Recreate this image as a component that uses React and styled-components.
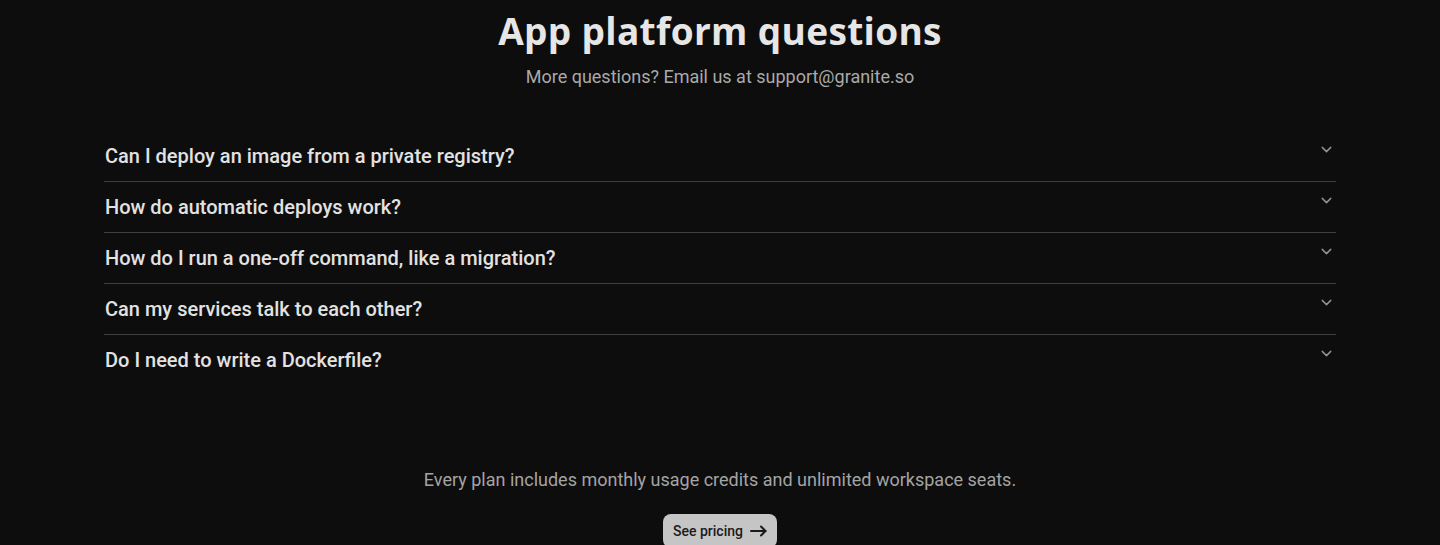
import React from 'react'
import styled, { createGlobalStyle } from 'styled-components'
import { ChevronDown } from 'lucide-react'

const questions = [
    'Can I deploy an image from a private registry?',
    'How do automatic deploys work?',
    'How do I run a one-off command, like a migration?',
    'Can my services talk to each other?',
    'Do I need to write a Dockerfile?',
]

const GlobalStyle = createGlobalStyle`
    body {
        margin: 0;
        background: #0d0d0d;
        font-family: Roboto, "Liberation Sans", sans-serif;
    }
`

// long thin arrow like the one on the pricing button
const Arrow = () => (
    <svg width="17" height="12" viewBox="0 0 17 12" fill="none" stroke="currentColor" strokeWidth="2" strokeLinecap="round" strokeLinejoin="round">
        <path d="M1 6h14.5" />
        <path d="M11 1.5L15.5 6 11 10.5" />
    </svg>
)

const App = () => {
    return (
        <>
            <GlobalStyle />
            <Page>
                <Header>
                    <Title>App platform questions</Title>
                    <Subtitle>More questions? Email us at support@granite.so</Subtitle>
                </Header>
                <List>
                    {questions.map((q) => (
                        <Item key={q}>
                            <Question>{q}</Question>
                            <Chevron>
                                <ChevronDown size={17} strokeWidth={2} />
                            </Chevron>
                        </Item>
                    ))}
                </List>
                <Footer>
                    <Note>Every plan includes monthly usage credits and unlimited workspace seats.</Note>
                    <PricingButton>
                        See pricing
                        <Arrow />
                    </PricingButton>
                </Footer>
            </Page>
        </>
    )
}

const Page = styled.div`
    display: flex;
    flex-direction: column;
    align-items: center;
    padding: 8px 104px 0;
    color: #e2e2e2;
`

const Header = styled.div`
    display: flex;
    flex-direction: column;
    align-items: center;
    gap: 12px;
`

const Title = styled.h1`
    margin: 0;
    font-family: "Open Sans", "Liberation Sans", sans-serif;
    font-size: 37px;
    font-weight: 700;
    line-height: 46px;
    letter-spacing: 0.35px;
    color: #e6e6e6;
`

const Subtitle = styled.p`
    margin: 0;
    font-size: 18px;
    line-height: 21px;
    color: #a9a9a9;
`

const List = styled.div`
    display: flex;
    flex-direction: column;
    width: 100%;
    margin-top: 44px;
`

const Item = styled.div`
    display: flex;
    justify-content: space-between;
    align-items: flex-start;
    height: 51px;
    padding: 0 1px 0 1px;
    box-sizing: border-box;
    border-bottom: 1px solid #3e3e3e;

    &:last-child {
        border-bottom: none;
    }
`

const Question = styled.span`
    font-size: 20px;
    font-weight: 500;
    line-height: 24px;
    margin-top: 13px;
    color: #e2e2e2;
`

const Chevron = styled.span`
    display: flex;
    color: #929292;
    margin-top: 10px;
`

const Footer = styled.div`
    display: flex;
    flex-direction: column;
    align-items: center;
    gap: 24px;
    margin-top: 83px;
`

const Note = styled.p`
    margin: 0;
    font-size: 18px;
    line-height: 21px;
    color: #a4a4a4;
`

const PricingButton = styled.button`
    display: flex;
    align-items: center;
    gap: 7px;
    height: 34px;
    padding: 0 10px;
    border: none;
    border-radius: 8px;
    background: #c5c5c5;
    color: #1a1a1a;
    font-family: Roboto, "Liberation Sans", sans-serif;
    font-size: 14px;
    font-weight: 500;
`

export default App
